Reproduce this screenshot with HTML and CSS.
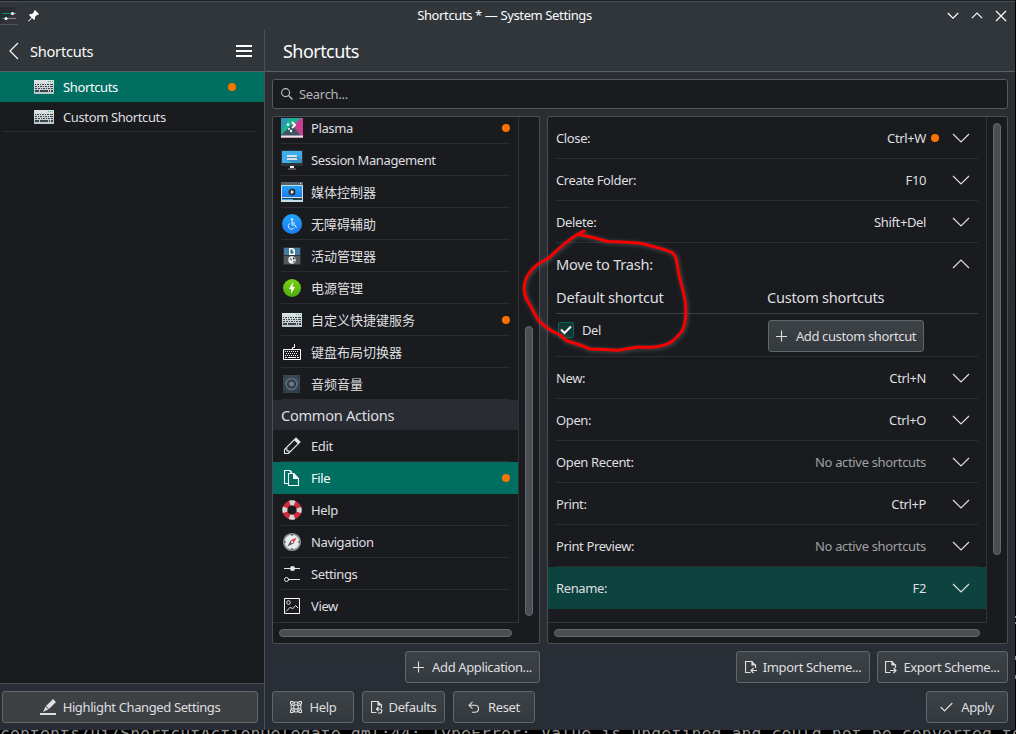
FILE: index.html
```html
<!DOCTYPE html>
<html lang="en">
<head>
<meta charset="utf-8">
<title>Shortcuts * — System Settings</title>
<link rel="stylesheet" href="styles.css">
</head>
<body>
<svg class="defs" width="0" height="0">
  <linearGradient id="keys" x1="0" y1="0" x2="0" y2="1"><stop offset="0" stop-color="#dfe3e4"/><stop offset="1" stop-color="#b9c6ca"/></linearGradient>
  <linearGradient id="sky" x1="0" y1="0" x2="0" y2="1"><stop offset="0" stop-color="#21a5fa"/><stop offset="1" stop-color="#1d7bf0"/></linearGradient>
  <linearGradient id="green" x1="0" y1="0" x2="0" y2="1"><stop offset="0" stop-color="#7bd111"/><stop offset="1" stop-color="#4bad10"/></linearGradient>
  <symbol id="keyboard" viewBox="0 0 20 14">
    <rect width="20" height="14" fill="url(#keys)"/>
    <path d="M14 1.500h1M16 1.500h1M18 1.500h1" stroke="#2ecc71"/>
    <path d="M1 4.500h1M3 4.500h2M6 4.500h1M8 4.500h2M11 4.500h1M13 4.500h2M16 4.500h3" stroke="#394548"/>
    <path d="M1 6.500h2M4 6.500h1M6 6.500h2M9 6.500h1M11 6.500h2M14 6.500h1M16 6.500h3" stroke="#394548"/>
    <path d="M1 8.500h2M4 8.500h2M7 8.500h1M9 8.500h2M12 8.500h1M14 8.500h2M17 8.500h2" stroke="#394548"/>
    <path d="M1 11h4M6 11h8M15 11h1M17 11h2" stroke="#394548" stroke-width="2"/>
  </symbol>
  <symbol id="down" viewBox="0 0 18 10"><path d="M1 1l8 8 8-8" fill="none" stroke="currentColor" stroke-width="1.15"/></symbol>
  <symbol id="plus" viewBox="0 0 12 12"><path d="M5.500 .5v11M0 6.500h11" stroke="currentColor" stroke-width="1.100"/></symbol>
  <symbol id="doc" viewBox="0 0 12 13"><path d="M5.500 11.500H.5V.5H7v3.500h3.500v3" fill="none" stroke="currentColor" stroke-width="1.200"/><path d="M7 0l4 4H7z" fill="currentColor"/></symbol>
</svg>

<div class="window">
  <header class="titlebar">
    <div class="title-left">
      <svg width="18" height="18" viewBox="0 0 18 18"><path d="M0 0h18v18H0z" fill="#282b2f"/><path d="M0 18L18 0v18z" fill="#34363b"/><path d="M0 17.500h18" stroke="#505357"/><path d="M2 6.500h10" stroke="#008f7c"/><path d="M13 6.500h3M7 11.500h9" stroke="#85888a"/><path d="M2 11.500h4" stroke="#008f7c"/><circle cx="12.500" cy="6.500" r="1.500" fill="#fff"/><circle cx="6" cy="11.500" r="1.500" fill="#fff"/></svg>
      <svg class="pin" width="11" height="12" viewBox="0 0 11 12"><path d="M7 0l4 4-1 1h-1L7 7v2L6 10 4 8 1 11.500 0 11 3.500 7.500 1 5l1-1h2l2-2V1z" fill="#fcfcfc"/></svg>
    </div>
    <div class="title">Shortcuts * — System Settings</div>
    <div class="title-right">
      <svg width="12" height="7" viewBox="0 0 12 7"><path d="M.8 1L6 6.200 11.200 1" class="line"/></svg>
      <svg width="12" height="7" viewBox="0 0 12 7"><path d="M.8 6.200L6 1l5.200 5.200" class="line"/></svg>
      <svg width="12" height="12" viewBox="0 0 12 12"><path d="M1 1l10 10M11 1L1 11" class="line"/></svg>
    </div>
  </header>

  <div class="body">
    <aside class="sidebar">
      <div class="side-head">
        <svg width="10" height="18" viewBox="0 0 10 18"><path d="M9 1L1 9l8 8" class="line"/></svg>
        <span class="side-title">Shortcuts</span>
        <svg width="16" height="12" viewBox="0 0 16 12"><path d="M0 1h16M0 6h16M0 11h16" stroke="#fff" stroke-width="2"/></svg>
      </div>
      <div class="side-list">
        <div class="side-item active"><svg width="20" height="14"><use href="#keyboard"/></svg><span>Shortcuts</span><i class="dot"></i></div>
        <div class="side-item"><svg width="20" height="14"><use href="#keyboard"/></svg><span>Custom Shortcuts</span></div>
      </div>
      <div class="side-foot">
        <button class="btn wide"><svg width="16" height="16" viewBox="0 0 16 16"><path d="M0 15h16" stroke="currentColor" stroke-width="2"/><path d="M13 0l3 3-7 7-3-3zM5.500 7.500L8.500 10.500 6 11.500 3 13z" fill="currentColor"/></svg><span>Highlight Changed Settings</span></button>
      </div>
    </aside>

    <main class="main">
      <h1 class="page-title">Shortcuts</h1>
      <div class="content">
        <div class="search"><svg width="12" height="12" viewBox="0 0 12 12"><circle cx="4.600" cy="4.600" r="4" fill="none" stroke="#bfc1c2" stroke-width="1.100"/><path d="M7.500 7.500l4 4" stroke="#bfc1c2" stroke-width="1.200"/></svg><span>Search...</span></div>

        <div class="panes">
          <section class="pane">
            <div class="view components">
              <div class="item"><svg width="22" height="22" viewBox="0 0 22 22"><path d="M0 1h22v20H0z" fill="#c4408e"/><path d="M0 1h20L0 19z" fill="#1db192"/><path d="M0 1h9L0 13z" fill="#2997b3"/><path d="M0 18L11 8l9 11H0z" fill="#3f5362"/><path d="M0 19.500h22" stroke="#e5e7e8" stroke-width="2"/><path d="M11 5l3 3-3 3" fill="none" stroke="#fff" stroke-width="1.800"/><circle cx="7" cy="7.500" r="1.300" fill="#fff"/><circle cx="8" cy="12" r="1" fill="#fff"/><circle cx="10" cy="14" r="1.200" fill="#fff"/></svg><span>Plasma</span><i class="dot"></i></div>
              <div class="item"><svg width="22" height="22" viewBox="0 0 22 22"><path d="M0 1h22v16H0z" fill="#303337"/><path d="M1 2h20v12H1z" fill="#3daee9"/><path d="M6 6h10l5 5v3H12L6 11z" fill="#3593c5"/><path d="M6 7h10M6 10h10" stroke="#d6e2e8" stroke-width="2"/><path d="M9 17h4v2H9z" fill="#eee"/><path d="M7 20h8" stroke="#888"/></svg><span>Session Management</span></div>
              <div class="item"><svg width="22" height="22" viewBox="0 0 22 22"><path d="M0 1h22v3H0z" fill="#566068"/><path d="M0 4h22v17H0z" fill="#c9dde9"/><path d="M1 5h20v11H1z" fill="url(#sky)"/><path d="M1 17h20v2H1z" fill="#2d3d46"/><path d="M1 18.500h11" stroke="#3daee9"/><path d="M19 2h1v1h-1z" fill="#fff"/><circle cx="11" cy="11" r="3.600" fill="#30383e"/><path d="M10 9l3 2-3 2z" fill="#fff"/></svg><span class="cjk">媒体控制器</span></div>
              <div class="item"><svg width="22" height="22" viewBox="0 0 22 22"><circle cx="11" cy="11" r="10" fill="url(#sky)"/><circle cx="11" cy="6.500" r="1.200" fill="#d7efff"/><path d="M11 8v4h3l1.500 3M11 10h3M9 10.500a3 3 0 1 0 4 4" fill="none" stroke="#d7efff" stroke-width="1"/></svg><span class="cjk">无障碍辅助</span></div>
              <div class="item"><svg width="22" height="22" viewBox="0 0 22 22"><path d="M2 2h18v18H2z" fill="#30343a"/><path d="M3 3h16v7H3z" fill="#3f7c9d"/><path d="M3 11h16v8H3z" fill="#55585c"/><path d="M8 3h4l2 2v5H8z" fill="#fff"/><path d="M9.500 4.500h2v2h1v2h-3z" fill="#2b6282"/><circle cx="11" cy="15" r="3.700" fill="#eee"/><path d="M9 13l2 1-1 2zM12 12l2 1-1 2-1-1zM12 16h2l-1 2z" fill="#3d4145"/></svg><span class="cjk">活动管理器</span></div>
              <div class="item"><svg width="22" height="22" viewBox="0 0 22 22"><circle cx="11" cy="11" r="9" fill="url(#green)"/><path d="M12 5l-4 7h2.500L10 17l4-7h-2.500z" fill="#fff"/></svg><span class="cjk">电源管理</span></div>
              <div class="item"><svg width="22" height="22" viewBox="0 0 22 22"><use href="#keyboard" x="1" y="4" width="20" height="14"/></svg><span class="cjk">自定义快捷键服务</span><i class="dot"></i></div>
              <div class="item"><svg width="22" height="22" viewBox="0 0 22 22"><path d="M2.500 8.500h17v10h-17zM11.500 8V6.500h2V3" fill="none" stroke="#fcfcfc"/><path d="M4 10.500h14M5 12.500h12M4 14.500h14" stroke="#fcfcfc" stroke-dasharray="1 1"/><path d="M4 16.500h2M7 16.500h8M16 16.500h2" stroke="#fcfcfc"/></svg><span class="cjk">键盘布局切换器</span></div>
              <div class="item"><svg width="22" height="22" viewBox="0 0 22 22"><path d="M2 2h17v18H2z" fill="#31414e"/><path d="M2 2h17v9H2z" fill="#3a4855"/><circle cx="10.500" cy="11" r="6.300" fill="#5c6b78"/><circle cx="10.500" cy="11" r="4.500" fill="#2e3b46"/><circle cx="10.500" cy="11" r="2.500" fill="#6c7984"/><path d="M3 3h1v1H3zM17 3h1v1h-1zM3 18h1v1H3zM17 18h1v1h-1z" fill="#17222b"/></svg><span class="cjk">音频音量</span></div>
              <div class="section">Common Actions</div>
              <div class="item"><svg width="22" height="22" viewBox="0 0 22 22"><path d="M3.500 14.500L15 3l4 4L7.500 18.500h-4zM4 14h2v2h2v2" fill="none" stroke="#e4e5e5" stroke-width="1.100"/><path d="M15 3l4 4-2 2-4-4z" fill="#e4e5e5"/></svg><span>Edit</span></div>
              <div class="item active"><svg width="22" height="22" viewBox="0 0 22 22"><path d="M7 16.500H3.500v-13H9l2 2M7.500 6.500H13l4.500 5v7h-10z" fill="none" stroke="#fcfcfc" stroke-width="1.100"/><path d="M8 3l4 4h-2zM12 6l6 6h-6z" fill="#fcfcfc"/></svg><span>File</span><i class="dot"></i></div>
              <div class="item"><svg width="22" height="22" viewBox="0 0 22 22"><circle cx="11" cy="11" r="7.200" fill="none" stroke="#d12b3b" stroke-width="5"/><circle cx="11" cy="11" r="7.200" fill="none" stroke="#d2d6d7" stroke-width="5" stroke-dasharray="5 6.310" stroke-dashoffset="2.500"/></svg><span>Help</span></div>
              <div class="item"><svg width="22" height="22" viewBox="0 0 22 22"><circle cx="11" cy="11" r="8.200" fill="#e9eaea" stroke="#89959b" stroke-width="1.800"/><path d="M11 3v2M11 17v2M3 11h2M17 11h2" stroke="#31363b"/><path d="M15.500 6.500l-3 6-3-3z" fill="#da3b45"/><path d="M6.500 15.500l3-6 3 3z" fill="#555b61"/><circle cx="11" cy="11" r="1" fill="#fff"/></svg><span>Navigation</span></div>
              <div class="item"><svg width="22" height="22" viewBox="0 0 22 22"><path d="M3 5.500h16M7 16.500h12" stroke="#e4e5e5"/><circle cx="11.500" cy="5.500" r="2.500" fill="#e4e5e5"/><circle cx="5.500" cy="16.500" r="2" fill="none" stroke="#e4e5e5"/></svg><span>Settings</span></div>
              <div class="item last"><svg width="22" height="22" viewBox="0 0 22 22"><path d="M3.500 3.500h15v15h-15z" fill="none" stroke="#fcfcfc"/><circle cx="7.500" cy="7.500" r="1.800" fill="none" stroke="#e4e5e5"/><path d="M5 16.500L9.500 12l2 2 3-3.500L17 13" fill="none" stroke="#e4e5e5"/></svg><span>View</span></div>
            </div>
            <div class="vtrack"><div class="thumb components-thumb"></div></div>
            <div class="htrack"><div class="thumb"></div></div>
          </section>

          <section class="pane">
            <div class="view actions">
              <div class="action"><span>Close:</span><span class="keys">Ctrl+W</span><i class="dot"></i><svg width="18" height="10"><use href="#down"/></svg></div>
              <div class="action"><span>Create Folder:</span><span class="keys">F10</span><svg width="18" height="10"><use href="#down"/></svg></div>
              <div class="action"><span>Delete:</span><span class="keys">Shift+Del</span><svg width="18" height="10"><use href="#down"/></svg></div>
              <div class="expanded">
                <div class="exp-head"><span>Move to Trash:</span><svg class="up" width="18" height="10"><use href="#down"/></svg></div>
                <div class="exp-cols"><span>Default shortcut</span><span>Custom shortcuts</span></div>
                <div class="exp-body">
                  <div class="check-row"><span class="check"><svg width="12" height="10" viewBox="0 0 12 10"><path d="M1 4.500l3.500 3.500L11 1.500" fill="none" stroke="#fcfcfc" stroke-width="2"/></svg></span><span>Del</span></div>
                  <button class="btn add-custom"><svg width="12" height="12"><use href="#plus"/></svg><span>Add custom shortcut</span></button>
                </div>
              </div>
              <div class="action"><span>New:</span><span class="keys">Ctrl+N</span><svg width="18" height="10"><use href="#down"/></svg></div>
              <div class="action"><span>Open:</span><span class="keys">Ctrl+O</span><svg width="18" height="10"><use href="#down"/></svg></div>
              <div class="action"><span>Open Recent:</span><span class="keys none">No active shortcuts</span><svg width="18" height="10"><use href="#down"/></svg></div>
              <div class="action"><span>Print:</span><span class="keys">Ctrl+P</span><svg width="18" height="10"><use href="#down"/></svg></div>
              <div class="action"><span>Print Preview:</span><span class="keys none">No active shortcuts</span><svg width="18" height="10"><use href="#down"/></svg></div>
              <div class="action hover"><span>Rename:</span><span class="keys">F2</span><svg width="18" height="10"><use href="#down"/></svg></div>
            </div>
            <div class="vtrack"><div class="thumb actions-thumb"></div></div>
            <div class="htrack"><div class="thumb"></div></div>
          </section>
        </div>

        <div class="buttons scheme">
          <button class="btn add-app"><svg width="12" height="12"><use href="#plus"/></svg><span>Add Application...</span></button>
          <button class="btn import"><svg width="12" height="13" viewBox="0 0 12 13"><use href="#doc"/><path d="M12 9.500H6M8.500 7L6 9.500 8.500 12" fill="none" stroke="currentColor" stroke-width="1.200"/></svg><span>Import Scheme...</span></button>
          <button class="btn export"><svg width="12" height="13" viewBox="0 0 12 13"><use href="#doc"/><path d="M5 9.500h6M8.500 7l2.500 2.500L8.500 12" fill="none" stroke="currentColor" stroke-width="1.200"/></svg><span>Export Scheme...</span></button>
        </div>
        <div class="buttons">
          <button class="btn help"><svg width="12" height="12" viewBox="0 0 12 12"><circle cx="6" cy="6" r="5" class="thin"/><circle cx="6" cy="6" r="2.300" class="thin"/><path d="M.5 3.500v-3h3M8.500 .5h3v3M11.500 8.500v3h-3M3.500 11.500h-3v-3" class="thin"/><path d="M4.300 .8v3M7.700 .8v3M4.300 8v3M7.700 8v3M1 4.300h3M8 4.300h3M1 7.700h3M8 7.700h3" class="thin"/></svg><span>Help</span></button>
          <button class="btn defaults"><svg width="12" height="13" viewBox="0 0 12 13"><use href="#doc"/><path d="M7.500 6L5.500 8l2 2M5.500 8H9q1.800 0 1.800 2T9 12H7" fill="none" stroke="currentColor" stroke-width="1.200"/></svg><span>Defaults</span></button>
          <button class="btn reset"><svg width="12" height="12" viewBox="0 0 12 12"><path d="M4.500 .8L1 4.200l3.500 3.500M1 4.200h6q3.500 0 3.500 3.500T7 11.300H4" class="thin"/></svg><span>Reset</span></button>
          <button class="btn apply"><svg width="13" height="10" viewBox="0 0 13 10"><path d="M.7 5l3.800 4L12.300 1" class="thin"/></svg><span>Apply</span></button>
        </div>
      </div>
    </main>
  </div>
</div>
<div class="terminal"><div class="log">contents/ui/ShortcutActionDelegate.qml:44: TypeError: Value is undefined and could not be converted to</div></div>

<svg class="annotation" width="1016" height="734" viewBox="0 0 1016 734">
  <path d="M584 231L577.700 234.300C568 240 557 250 548.300 258.300L538 264C530 270 524.300 279 524.300 288C524 295 526 299 530 305C533 310 536 318 540 322Q548 329 552 331L560 335L567 341Q576 343 590 349Q606 349.500 618 350.300L638 347Q653 348 660 346Q667 345 672 341.500Q680 334 682 331Q686 323 685.700 312Q686 303 684 295L679 275L676 258Q674 254 671.700 252.300Q664 249 655 247L642 243.500Q628 242 608 241.500Q592 237 577.700 234.300"/>
  <g class="edge"><path d="M1015.500 616v2M1015.500 622v2M1015.500 656v4M1015.500 675v4"/></g>
</svg>
</body>
</html>
```

FILE: styles.css
```css
* { box-sizing: border-box; }
body {
  margin: 0; width: 1016px; height: 734px; overflow: hidden; background: #000;
  color: #dfdfe0; font: 13px/18px "Noto Sans", "Noto Sans CJK SC", sans-serif;
  letter-spacing: -0.38px;
}
svg { display: block; flex: none; }
.defs { position: absolute; }
.cjk { letter-spacing: 0; }
.line { fill: none; stroke: #fcfcfc; stroke-width: 1.2; }
.thin { fill: none; stroke: currentColor; stroke-width: 1.1; }
.window {
  width: 1015px; height: 730px; display: flex; flex-direction: column;
  background: linear-gradient(#31363b, #31363b 71px, #2a2e33 72px, #292d35);
  border-top: 1px solid #1b1e20; box-shadow: inset 0 1px #4b5054;
}
.titlebar { height: 29px; display: grid; grid-template-columns: 1fr auto 1fr; align-items: center; color: #fcfcfc; }
.title { padding: 0 6px 2px 0; }
.title-left { display: flex; align-items: center; gap: 10px; }
.title-right { display: flex; align-items: center; justify-content: flex-end; gap: 12px; padding-right: 8px; }
.body { flex: 1; display: flex; min-height: 0; }
.sidebar { width: 265px; border-right: 1px solid #4a5156; display: flex; flex-direction: column; }
.side-head {
  height: 42px; display: flex; align-items: center; gap: 11px; padding: 1px 12px 0 9px;
  border-bottom: 1px solid #5a5f63; color: #fcfcfc; font-size: 14.6px; letter-spacing: -0.25px;
}
.side-title { flex: 1; }
.side-list { flex: 1; background: #1a1b1e; }
.side-item { height: 30px; display: flex; align-items: center; gap: 9px; padding: 0 28px 0 34px; }
.side-item.active { color: #fcfcfc; }
.side-item:last-child { background: linear-gradient(#292b2f, #292b2f) 3px 29px / 254px 1px no-repeat; }
.active { background: #006f62; }
.dot { width: 8px; height: 8px; border-radius: 50%; background: #f67400; margin-left: auto; flex: none; }
.side-foot { height: 47px; border-top: 1px solid #4d5256; padding: 7px 6px 0 2px; }
.btn {
  height: 32px; display: flex; align-items: center; justify-content: center; gap: 8px; padding: 0;
  border: 1px solid #62676a; border-radius: 3px; background: linear-gradient(#3d4246, #34393d);
  color: #dfdfe0; font: inherit; letter-spacing: inherit; white-space: nowrap;
}
.wide { width: 256px; background: #3d4144; gap: 7px; }
.main { flex: 1; min-width: 0; display: flex; flex-direction: column; }
.page-title {
  margin: 0; height: 42px; padding: 1px 0 0 18px; border-bottom: 1px solid #5a5f63;
  font-size: 18px; line-height: 40px; font-weight: 400; color: #fcfcfc; letter-spacing: -0.55px;
}
.content { padding: 7px 7px 0; }
.search {
  height: 30px; display: flex; align-items: center; gap: 6px; padding-left: 8px;
  border: 1px solid #55595c; border-radius: 3px; background: #1a1b1e; color: #b4b5b6;
}
.search span { letter-spacing: -0.3px; }
.panes { height: 528px; margin-top: 7px; display: grid; grid-template-columns: 268px 461px; gap: 7px; }
.pane {
  display: grid; grid-template: 506px 1fr / 1fr 20px; min-width: 0;
  border: 1px solid #4b4f52; border-radius: 2px; background: #1a1b1e;
}
.view { overflow: hidden; border-right: 1px solid #313336; border-bottom: 1px solid #313336; }
.vtrack { padding: 6px 0 0 6px; }
.htrack { padding: 6px 7px 0 6px; }
.thumb { height: 8px; border: 1px solid #65696c; border-radius: 4px; background: #494e52; }
.vtrack .thumb { width: 8px; }
.components-thumb.thumb { height: 290px; margin-top: 203px; }
.actions-thumb.thumb { height: 432px; }
.item {
  height: 32px; display: flex; align-items: center; gap: 8px; padding: 0 8px;
  background: linear-gradient(#2b2d30, #2b2d30) 8px 31px / 229px 1px no-repeat;
}
.item:first-child { margin-top: -5px; }
.item.active { background: #006f62; color: #fcfcfc; }
.item.last { background: none; }
.section { height: 30px; padding-left: 8px; background: #292d33; font-size: 14.6px; line-height: 30px; letter-spacing: -0.28px; }
.action {
  height: 42px; display: flex; align-items: center; padding: 0 16px 0 8px;
  background: linear-gradient(#2b2d30, #2b2d30) 8px 41px / 422px 1px no-repeat;
}
.keys { margin: 0 26px 0 auto; }
.keys.none { color: #9fa1a2; letter-spacing: -0.34px; }
.keys:has(+ .dot) { margin-right: 5px; }
.action .dot { margin: 0 13px 0 0; }
.action.hover { background: #0d433e; }
.expanded { height: 114px; border-bottom: 1px solid #2b2d30; margin: 0 8px; font-size: 14.6px; letter-spacing: -0.24px; }
.exp-head { height: 42px; display: flex; justify-content: space-between; align-items: center; padding: 1px 8px 0 0; }
.exp-head span { padding-bottom: 2px; }
.up { transform: rotate(180deg); margin-top: -1px; }
.exp-cols { height: 29px; display: grid; grid-template-columns: 211px 1fr; line-height: 25px; border-bottom: 1px solid #3c3e41; }
.exp-body { display: grid; grid-template-columns: 212px 1fr; padding-top: 6px; font-size: 13px; letter-spacing: -0.38px; }
.check-row { display: flex; gap: 8px; align-items: center; height: 20px; padding-left: 2px; }
.check { width: 16px; height: 16px; border: 1px solid #00695d; border-radius: 2px; background: #143632; display: grid; place-items: center; }
.add-custom { width: 156px; }
.buttons { display: flex; gap: 8px; margin-top: 8px; }
.scheme { margin-top: 7px; gap: 7px; }
.add-app { width: 135px; margin-left: 133px; gap: 7px; }
.import { width: 134px; margin-left: auto; gap: 6px; }
.export { width: 131px; gap: 6px; }
.help { width: 82px; }
.defaults { width: 83px; gap: 6px; }
.reset { width: 82px; }
.apply { width: 82px; margin-left: auto; }
.terminal { height: 4px; overflow: hidden; color: #929292; }
.log { margin-top: -6px; font: 16.6px/20px "DejaVu Sans Mono", monospace; letter-spacing: 0.03px; white-space: pre; }
.annotation { position: absolute; left: 0; top: 0; pointer-events: none; fill: none; stroke: #f80000; stroke-width: 3; stroke-linecap: round; stroke-linejoin: round; }
.annotation > path { filter: drop-shadow(1px 1px 2px #74747499); }
.edge { stroke: #888; stroke-width: 1; stroke-linecap: butt; }
```
